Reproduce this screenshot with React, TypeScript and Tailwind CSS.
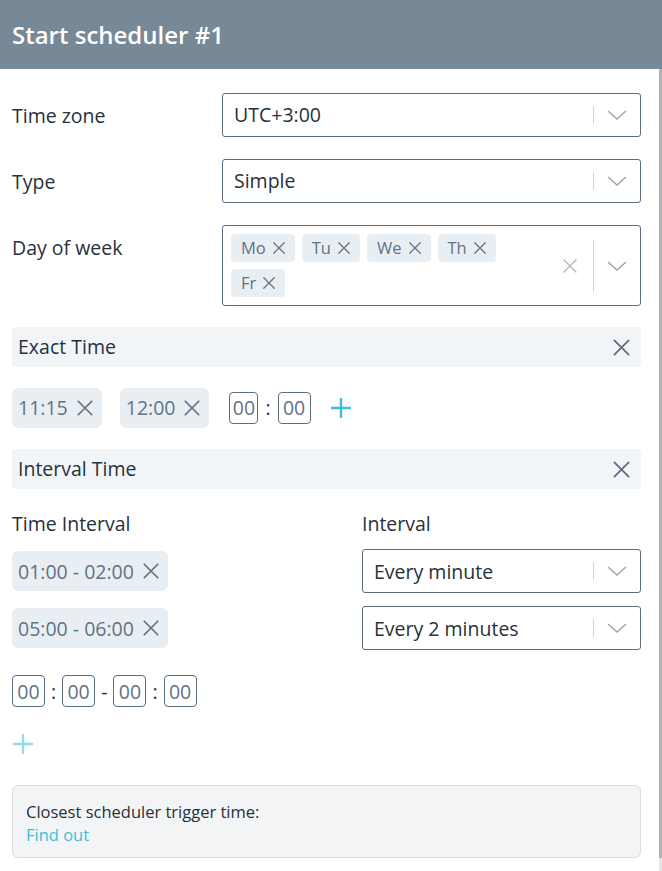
import React from 'react';

const X = ({ size = 16, className = '' }: { size?: number; className?: string }) => (
    <svg width={size} height={size} viewBox="0 0 16 16" className={className} fill="none" stroke="currentColor" strokeWidth={1.5} strokeLinecap="round">
        <path d="M2 2 L14 14 M14 2 L2 14" />
    </svg>
);

const Chevron = () => (
    <svg width="20" height="10" viewBox="0 0 20 10" fill="none" stroke="#9aa5b1" strokeWidth={1.4}>
        <path d="M1 1 L10 9 L19 1" />
    </svg>
);

const Plus = ({ className = '' }: { className?: string }) => (
    <svg width="22" height="22" viewBox="0 0 22 22" className={className} fill="none" stroke="currentColor" strokeWidth={2.4}>
        <path d="M11 1 V21 M1 11 H21" />
    </svg>
);

const Select = ({ value, className = '' }: { value: string; className?: string }) => (
    <div className={`h-[44px] border border-[#5b6e80] rounded-[3px] flex items-center pl-[11px] ${className}`}>
        <span className="flex-1 text-[19.5px] text-[#27313b]">{value}</span>
        <div className="w-px h-[18px] bg-[#cfd4d9]" />
        <div className="w-[46px] flex justify-center">
            <Chevron />
        </div>
    </div>
);

const Row = ({ label, children }: { label: string; children: React.ReactNode }) => (
    <div className="flex items-start">
        <div className="w-[210px] text-[19.5px] text-[#27313b] pt-[8px]">{label}</div>
        <div className="flex-1">{children}</div>
    </div>
);

const DayChip = ({ day }: { day: string }) => (
    <div className="h-[28px] rounded-[4px] bg-[#e9eef3] flex items-center gap-[6px] pl-[10px] pr-[9px] text-[16.5px] text-[#5f7386]">
        <span>{day}</span>
        <X size={14} />
    </div>
);

const TimeChip = ({ text }: { text: string }) => (
    <div className="h-[40px] rounded-[6px] bg-[#e9eef3] flex items-center gap-[8px] pl-[6px] pr-[8px] text-[19.5px] text-[#5f7386]">
        <span>{text}</span>
        <X size={18} />
    </div>
);

const Box = ({ w = 'w-[33px]' }: { w?: string }) => (
    <div className={`${w} h-[32px] border border-[#5b6e80] rounded-[4px] flex items-center justify-center text-[19.5px] text-[#5f7386]`}>00</div>
);

const SectionBar = ({ title }: { title: string }) => (
    <div className="h-[40px] bg-[#f2f5f8] rounded-[4px] flex items-center justify-between pl-[6px] pr-[10px]">
        <span className="text-[19.5px] text-[#27313b]">{title}</span>
        <X size={19} className="text-[#5b6e80]" />
    </div>
);

export default function App() {
    const days = ['Mo', 'Tu', 'We', 'Th'];
    return (
        <div className="w-[662px] h-[871px] bg-white font-['Open_Sans',sans-serif] flex flex-col overflow-hidden">
            <header className="h-[69px] bg-[#778896] flex items-center px-3 shrink-0">
                <h1 className="text-white text-[24px] font-semibold">Start scheduler #1</h1>
            </header>
            <div className="flex flex-1">
                <div className="flex-1 pl-3 pr-[18px] pt-[24px]">
                    <div className="flex flex-col gap-[22px]">
                        <Row label="Time zone">
                            <Select value="UTC+3:00" />
                        </Row>
                        <Row label="Type">
                            <Select value="Simple" />
                        </Row>
                        <Row label="Day of week">
                            <div className="h-[81px] border border-[#5b6e80] rounded-[3px] flex items-center pl-[8px]">
                                <div className="flex-1 flex flex-wrap gap-x-[7px] gap-y-[7px] pr-[50px]">
                                    {days.map((d) => <DayChip key={d} day={d} />)}
                                    <DayChip day="Fr" />
                                </div>
                                <X size={16} className="text-[#b4bcc4] mr-[15px]" />
                                <div className="w-px h-[52px] bg-[#cfd4d9]" />
                                <div className="w-[46px] flex justify-center">
                                    <Chevron />
                                </div>
                            </div>
                        </Row>
                    </div>

                    <div className="mt-[21px]">
                        <SectionBar title="Exact Time" />
                    </div>
                    <div className="flex items-center mt-[21px]">
                        <TimeChip text="11:15" />
                        <div className="w-[18px]" />
                        <TimeChip text="12:00" />
                        <div className="flex items-center gap-[7px] ml-[20px]">
                            <Box w="w-[29px]" />
                            <span className="text-[19.5px] text-[#27313b]">:</span>
                            <Box w="w-[33px]" />
                        </div>
                        <Plus className="text-[#3dbfd6] ml-[19px]" />
                    </div>

                    <div className="mt-[21px]">
                        <SectionBar title="Interval Time" />
                    </div>

                    <div className="grid grid-cols-[350px_1fr] mt-[20px]">
                        <div className="text-[19.5px] text-[#27313b]">Time Interval</div>
                        <div className="text-[19.5px] text-[#27313b]">Interval</div>
                    </div>
                    <div className="flex flex-col gap-[13px] mt-[11px]">
                        <div className="grid grid-cols-[350px_1fr] items-center">
                            <div className="flex"><TimeChip text="01:00 - 02:00" /></div>
                            <Select value="Every minute" />
                        </div>
                        <div className="grid grid-cols-[350px_1fr] items-center">
                            <div className="flex"><TimeChip text="05:00 - 06:00" /></div>
                            <Select value="Every 2 minutes" />
                        </div>
                    </div>

                    <div className="flex items-center gap-[6px] mt-[25px] text-[19.5px] text-[#27313b]">
                        <Box />
                        <span>:</span>
                        <Box />
                        <span>-</span>
                        <Box />
                        <span>:</span>
                        <Box />
                    </div>

                    <div className="mt-[26px]">
                        <Plus className="text-[#94dbe8]" />
                    </div>

                    <div className="mt-[30px] h-[73px] bg-[#f3f4f6] border border-[#d9dce1] rounded-[6px] px-[13px] pt-[14px] text-[16.5px] leading-[23px]">
                        <div className="text-[#27313b]">Closest scheduler trigger time:</div>
                        <div className="text-[#3dbfd6]">Find out</div>
                    </div>
                </div>
                <div className="w-[3px] flex flex-col">
                    <div className="h-[789px] bg-[#b3b3b3]" />
                    <div className="flex-1 bg-[#e6e6e6]" />
                </div>
            </div>
        </div>
    );
}
